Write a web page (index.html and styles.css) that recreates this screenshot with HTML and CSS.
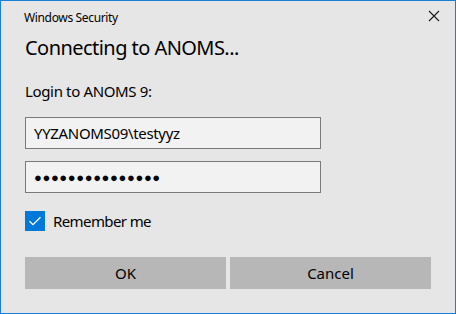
FILE: index.html
```html
<!DOCTYPE html>
<html>
<head>
<meta charset="utf-8">
<link rel="stylesheet" href="styles.css">
</head>
<body>
<div class="window">
  <div class="titlebar">
    <span class="title">Windows Security</span>
    <span class="close">
      <svg width="12" height="12" viewBox="0 0 12 12"><path d="M1 1L11 11M11 1L1 11" stroke="#1a1a1a" stroke-width="1.1" fill="none"/></svg>
    </span>
  </div>
  <div class="content">
    <h1 class="heading">Connecting to ANOMS...</h1>
    <p class="prompt">Login to ANOMS 9:</p>
    <div class="field"><span class="value">YYZANOMS09\testyyz</span></div>
    <div class="field"><span class="dots">●●●●●●●●●●●●●●●</span></div>
    <label class="check">
      <span class="box"><svg width="20" height="20" viewBox="0 0 20 20"><path d="M4.5 10.2L8 13.7L15.5 6.2" stroke="#fff" stroke-width="1.3" fill="none"/></svg></span>
      <span class="check-label">Remember me</span>
    </label>
    <div class="buttons">
      <button class="btn">OK</button>
      <button class="btn">Cancel</button>
    </div>
  </div>
</div>
</body>
</html>
```

FILE: styles.css
```css
html, body {
  margin: 0;
  padding: 0;
}
body {
  width: 456px;
  height: 314px;
  font-family: "Noto Sans", "Open Sans", sans-serif;
  color: #000;
}
.window {
  box-sizing: border-box;
  width: 456px;
  height: 314px;
  border: 1px solid #1a7fd4;
  background: #e6e6e6;
  display: flex;
  flex-direction: column;
}
.titlebar {
  height: 30px;
  display: flex;
  align-items: center;
  justify-content: space-between;
  padding: 0 15px 0 23px;
}
.title {
  font-size: 12px;
  letter-spacing: -0.35px;
  color: #000;
  position: relative;
  top: 1px;
}
.close {
  display: flex;
  width: 12px;
  height: 12px;
}
.content {
  padding: 0 24px;
  display: flex;
  flex-direction: column;
}
.heading {
  margin: 2px 0 0 0;
  font-size: 20px;
  font-weight: 400;
  letter-spacing: -0.55px;
  line-height: 30px;
  color: #000;
}
.prompt {
  margin: 18px 0 0 0;
  font-size: 15px;
  letter-spacing: -0.35px;
  line-height: 20px;
}
.field {
  box-sizing: border-box;
  width: 296px;
  height: 32px;
  border: 1px solid #7a7a7a;
  background: #f2f2f2;
  display: flex;
  align-items: center;
  padding-left: 8px;
}
.prompt + .field {
  margin-top: 16px;
}
.field + .field {
  margin-top: 12px;
}
.value {
  font-size: 15px;
  letter-spacing: -0.33px;
  color: #000;
}
.dots {
  font-size: 13px;
  letter-spacing: 0.6px;
  color: #000;
}
.check {
  display: flex;
  align-items: center;
  margin-top: 18px;
  gap: 8px;
}
.box {
  width: 20px;
  height: 20px;
  background: #0078d7;
  display: flex;
}
.check-label {
  font-size: 15px;
  letter-spacing: -0.6px;
}
.buttons {
  margin-top: 26px;
  display: grid;
  grid-template-columns: 201px 201px;
  gap: 4px;
}
.btn {
  height: 32px;
  border: none;
  background: #b7b7b7;
  font-family: inherit;
  font-size: 15px;
  color: #000;
  padding: 0;
}
```
